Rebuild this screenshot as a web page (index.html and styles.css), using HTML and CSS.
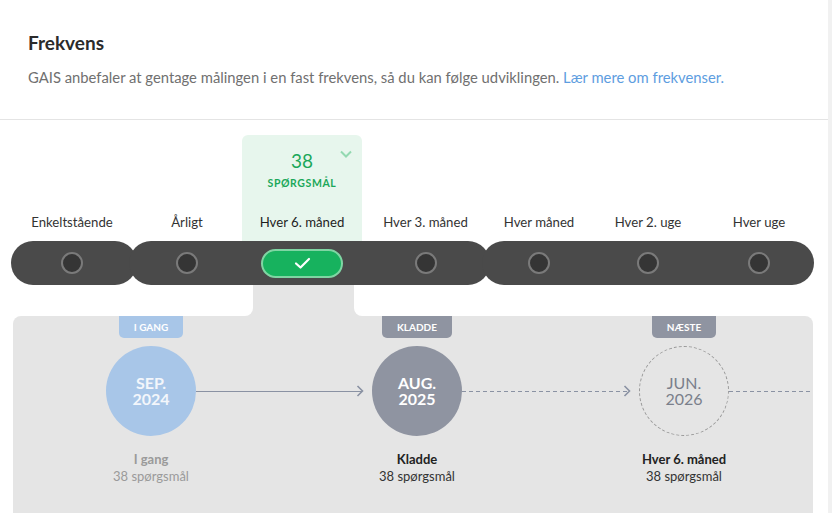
FILE: index.html
```html
<!DOCTYPE html>
<html lang="da">
<head>
  <meta charset="UTF-8">
  <meta name="viewport" content="width=device-width, initial-scale=1.0">
  <title>Frekvens</title>
  <link rel="stylesheet" href="styles.css">
</head>
<body>
  <div class="page">
    <div class="intro">
      <h2>Frekvens</h2>
      <p>GAIS anbefaler at gentage målingen i en fast frekvens, så du kan følge udviklingen. <a href="#">Lær mere om frekvenser.</a></p>
    </div>

    <div class="freq">
      <!-- option labels -->
      <div class="labels">
        <div class="col"><span class="label">Enkeltstående</span></div>
        <div class="col"><span class="label">Årligt</span></div>
        <div class="col selected">
          <div class="sel-box">
            <svg class="chev" width="12" height="8" viewBox="0 0 12 8"><path d="M1 1.5 L6 6.5 L11 1.5" fill="none" stroke="#93d9b1" stroke-width="2"/></svg>
            <div class="count">38</div>
            <div class="count-sub">Spørgsmål</div>
            <span class="label">Hver 6. måned</span>
          </div>
        </div>
        <div class="col"><span class="label">Hver 3. måned</span></div>
        <div class="col"><span class="label">Hver måned</span></div>
        <div class="col"><span class="label">Hver 2. uge</span></div>
        <div class="col"><span class="label">Hver uge</span></div>
      </div>

      <!-- the dark option bar -->
      <div class="bar">
        <div class="group first">
          <div class="cell w122"><span class="radio"></span></div>
        </div>
        <div class="group">
          <div class="cell w108"><span class="radio"></span></div>
          <div class="cell w124">
            <span class="checked">
              <svg width="17" height="13" viewBox="0 0 17 13"><path d="M2 6.5 L6.5 10.5 L15 2" fill="none" stroke="#fff" stroke-width="2.2" stroke-linecap="round" stroke-linejoin="round"/></svg>
            </span>
          </div>
          <div class="cell w121"><span class="radio"></span></div>
        </div>
        <div class="group last">
          <div class="cell w106"><span class="radio"></span></div>
          <div class="cell w112"><span class="radio"></span></div>
          <div class="cell w110"><span class="radio"></span></div>
        </div>
      </div>

      <div class="tabrow">
        <div class="tab-left"></div>
        <div class="tab"></div>
        <div class="tab-right"></div>
      </div>

      <!-- timeline -->
      <div class="timeline">
        <div class="tag current c2">I gang</div>
        <div class="tag draft c4">Kladde</div>
        <div class="tag next c6">Næste</div>

        <div class="circle current c2"><span>SEP.</span><span>2024</span></div>
        <div class="link c3">
          <div class="line"></div>
          <svg class="arrow" width="8" height="12" viewBox="0 0 8 12"><path d="M1.5 1 L6.5 6 L1.5 11" fill="none" stroke="#8a92a3" stroke-width="1.6"/></svg>
        </div>
        <div class="circle draft c4"><span>AUG.</span><span>2025</span></div>
        <div class="link c5">
          <div class="line dashed"></div>
          <svg class="arrow" width="8" height="12" viewBox="0 0 8 12"><path d="M1.5 1 L6.5 6 L1.5 11" fill="none" stroke="#8a92a3" stroke-width="1.6"/></svg>
        </div>
        <div class="circle next c6"><span>JUN.</span><span>2026</span></div>
        <div class="link c7 open">
          <div class="line dashed"></div>
        </div>

        <div class="step c2 muted">
          <strong>I gang</strong>
          <span>38 spørgsmål</span>
        </div>
        <div class="step c4">
          <strong>Kladde</strong>
          <span>38 spørgsmål</span>
        </div>
        <div class="step c6">
          <strong>Hver 6. måned</strong>
          <span>38 spørgsmål</span>
        </div>
      </div>
    </div>
  </div>
</body>
</html>
```

FILE: styles.css
```css
body {
  margin: 0;
  padding: 0;
  background-color: #f1f1f1;
  font-family: Lato, "Open Sans", Arial, sans-serif;
  color: #333;
}

.page {
  width: 828px;
  height: 513px;
  overflow: hidden;
  background-color: #fff;
}

.intro {
  padding: 31px 28px 32px 28px;
  border-bottom: 1px solid #e4e4e4;
}

.intro h2 {
  margin: 0;
  font-size: 19px;
  line-height: 24px;
  font-weight: 700;
  color: #2b2b2b;
}

.intro p {
  margin: 12px 0 0 0;
  font-size: 14.8px;
  line-height: 20px;
  color: #707070;
}

.intro a {
  color: #5d9de0;
  text-decoration: none;
}

.freq {
  padding-top: 15px;
}

/* labels above the bar */
.labels {
  display: grid;
  grid-template-columns: 122px 108px 124px 121px 106px 112px 110px;
  margin-left: 11px;
  height: 106px;
}

.col {
  display: flex;
  flex-direction: column;
  justify-content: flex-end;
  align-items: center;
  padding-bottom: 10px;
}

.label {
  font-size: 13.2px;
  line-height: 18px;
  color: #333;
  white-space: nowrap;
}

.col.selected {
  padding-bottom: 0;
  align-items: stretch;
}

.sel-box {
  position: relative;
  flex: 1;
  margin: 0 3px 0 1px;
  padding-top: 16px;
  padding-bottom: 10px;
  display: flex;
  flex-direction: column;
  align-items: center;
  background-color: #e7f6ed;
  border-radius: 6px 6px 0 0;
}

.sel-box .label {
  margin-top: auto;
  color: #1e1e1e;
}

.chev {
  position: absolute;
  top: 15px;
  right: 10px;
}

.count {
  font-size: 19px;
  line-height: 20px;
  color: #1ba85a;
}

.count-sub {
  margin-top: 6px;
  font-size: 10.5px;
  line-height: 12px;
  font-weight: 700;
  letter-spacing: 0.6px;
  text-transform: uppercase;
  color: #1ba85a;
}

/* dark bar */
.bar {
  display: flex;
  margin-left: 11px;
  height: 44px;
}

.group {
  display: flex;
  height: 44px;
  padding: 0 4px;
  margin-left: -8px;
  background-color: #4a4a4a;
  border-radius: 22px;
}

.group.first {
  margin-left: 0;
  padding-left: 0;
}

.group.last {
  padding-right: 0;
}

.cell {
  display: flex;
  align-items: center;
  justify-content: center;
}

.w122 { width: 122px; }
.w108 { width: 108px; }
.w124 { width: 124px; }
.w121 { width: 121px; }
.w106 { width: 106px; }
.w112 { width: 112px; }
.w110 { width: 110px; }

.radio {
  width: 18px;
  height: 18px;
  border: 2px solid #7a7a7a;
  border-radius: 50%;
  background-color: #353535;
}

.checked {
  display: flex;
  align-items: center;
  justify-content: center;
  width: 78px;
  height: 25px;
  margin-left: -2px;
  border: 2px solid #7fd5a3;
  border-radius: 15px;
  background-color: #17b25e;
}

/* tab connecting the selected option with the panel */
.tabrow {
  display: flex;
  height: 31px;
  margin: 0 15px 0 13px;
  background-color: #e5e5e5;
}

.tab-left {
  width: 240px;
  background-color: #fff;
  border-bottom-right-radius: 8px;
}

.tab {
  width: 101px;
}

.tab-right {
  flex: 1;
  background-color: #fff;
  border-bottom-left-radius: 8px;
}

/* timeline panel */
.timeline {
  display: grid;
  grid-template-columns: 93px 90px 176px 90px 177px 90px 1fr;
  grid-template-rows: 22px 90px auto;
  row-gap: 8px;
  margin: 0 15px 0 13px;
  height: 210px;
  align-content: start;
  background-color: #e5e5e5;
  border-radius: 8px 8px 0 0;
}

.c2 { grid-column: 2; }
.c3 { grid-column: 3; }
.c4 { grid-column: 4; }
.c5 { grid-column: 5; }
.c6 { grid-column: 6; }
.c7 { grid-column: 7; }

.tag {
  grid-row: 1;
  justify-self: center;
  padding: 0 15px;
  height: 22px;
  line-height: 22px;
  font-size: 10px;
  font-weight: 700;
  text-transform: uppercase;
  color: #fff;
  border-radius: 0 0 5px 5px;
  white-space: nowrap;
}

.tag.current { background-color: #a8c6e8; }
.tag.draft { background-color: #8f94a1; }
.tag.next { background-color: #8f94a1; }

.circle {
  grid-row: 2;
  box-sizing: border-box;
  width: 90px;
  height: 90px;
  border-radius: 50%;
  display: flex;
  flex-direction: column;
  align-items: center;
  justify-content: center;
  font-size: 16px;
  line-height: 16px;
  font-weight: 700;
}

.circle span {
  display: block;
  height: 16px;
}

.circle.current {
  background-color: #a8c6e8;
  color: #f3f6fb;
}

.circle.draft {
  background-color: #8f94a1;
  color: #fff;
}

.circle.next {
  border: 1px dashed #9a9a9a;
  color: #7a7f8b;
  font-weight: 400;
}

.link {
  grid-row: 2;
  display: flex;
  align-items: center;
  padding-right: 8px;
}

.link.open {
  padding-right: 0;
}

.line {
  flex: 1;
  height: 1px;
  margin-right: -6px;
  background-color: #8a92a3;
}

.line.dashed {
  background-color: transparent;
  background-image: repeating-linear-gradient(to right, #8a92a3 0 4px, transparent 4px 7px);
}

.link.open .line {
  margin-right: 0;
}

.arrow {
  display: block;
}

.step {
  grid-row: 3;
  display: flex;
  flex-direction: column;
  align-items: center;
  margin-top: 7px;
  font-size: 13px;
  line-height: 17px;
  color: #333;
  white-space: nowrap;
}

.step strong {
  color: #222;
}

.step.muted,
.step.muted strong {
  color: #9a9a9a;
}
```
